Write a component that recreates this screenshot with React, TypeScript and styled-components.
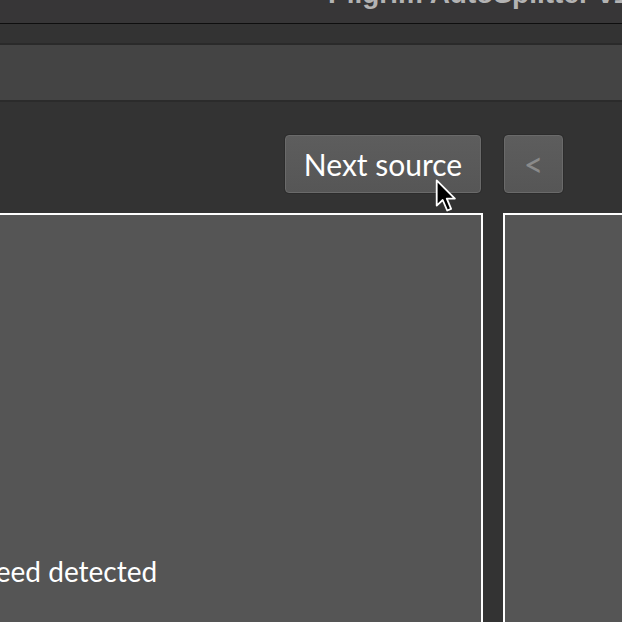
import React from "react";
import styled, { createGlobalStyle } from "styled-components";

const GlobalStyle = createGlobalStyle`
  html, body {
    margin: 0;
    padding: 0;
    background: #333333;
    overflow: hidden;
  }
  body {
    font-family: Lato, "Open Sans", sans-serif;
  }
`;

const Screen = styled.div`
  position: relative;
  width: 622px;
  height: 622px;
  overflow: hidden;
  background: #333333;
`;

const TitleBar = styled.div`
  height: 23px;
  background: #373637;
  border-bottom: 1px solid #0e0e0e;
  overflow: hidden;
`;

const Title = styled.div`
  margin-top: -20px;
  padding-left: 328px;
  font-family: "Liberation Sans", Arial, sans-serif;
  font-weight: 700;
  font-size: 28px;
  line-height: 28px;
  color: #b3b3b3;
  white-space: nowrap;
`;

const SubBar = styled.div`
  height: 19px;
  background: #333333;
  border-bottom: 2px solid #2a2a2a;
`;

const ToolBand = styled.div`
  height: 55px;
  background: #444444;
  border-bottom: 2px solid #2b2b2b;
`;

const ButtonRow = styled.div`
  display: flex;
  justify-content: flex-end;
  gap: 23px;
  padding: 33px 59px 20px 0;
`;

const Button = styled.button<{ $w: number; $dim?: boolean }>`
  width: ${(p) => p.$w}px;
  height: 58px;
  margin: 0;
  padding: 0;
  border-radius: 4px;
  border: 1px solid #6a6a6a;
  box-shadow: 0 0 0 1px #2c2c2c;
  background: linear-gradient(#5d5d5d, #565656);
  color: ${(p) => (p.$dim ? "#8a8a8a" : "#ffffff")};
  font-family: Lato, "Open Sans", sans-serif;
  font-size: ${(p) => (p.$dim ? "34px" : "30px")};
  font-weight: 400;
  line-height: 1;
  display: flex;
  align-items: center;
  justify-content: center;
`;

const PanelRow = styled.div`
  display: flex;
  gap: 20px;
  margin-left: -120px;
`;

const Panel = styled.div<{ $w: number }>`
  flex: 0 0 auto;
  width: ${(p) => p.$w}px;
  height: 600px;
  box-sizing: border-box;
  background: #555555;
  border: 2px solid #ffffff;
`;

const Status = styled.div`
  padding: 339px 0 0 42px;
  font-family: Lato, "Open Sans", sans-serif;
  font-size: 28px;
  line-height: 34px;
  color: #ffffff;
  white-space: nowrap;
`;

const Cursor = styled.svg`
  position: absolute;
  left: 435px;
  top: 179px;
  width: 23px;
  height: 35px;
`;

export default function App() {
  return (
    <Screen>
      <GlobalStyle />
      <TitleBar>
        <Title>Pilgrim AutoSplitter v1.0</Title>
      </TitleBar>
      <SubBar />
      <ToolBand />
      <ButtonRow>
        <Button $w={196}>Next source</Button>
        <Button $w={59} $dim>
          &lt;
        </Button>
      </ButtonRow>
      <PanelRow>
        <Panel $w={603}>
          <Status>No speed detected</Status>
        </Panel>
        <Panel $w={300} />
      </PanelRow>
      <Cursor viewBox="0 0 16 25">
        <path
          d="M1 1 L1 19 L5.3 15 L8.5 22.5 L11.3 21.3 L8.2 14 L14 14 Z"
          fill="#000"
          stroke="#fff"
          strokeWidth="1.3"
          strokeLinejoin="round"
        />
      </Cursor>
    </Screen>
  );
}
